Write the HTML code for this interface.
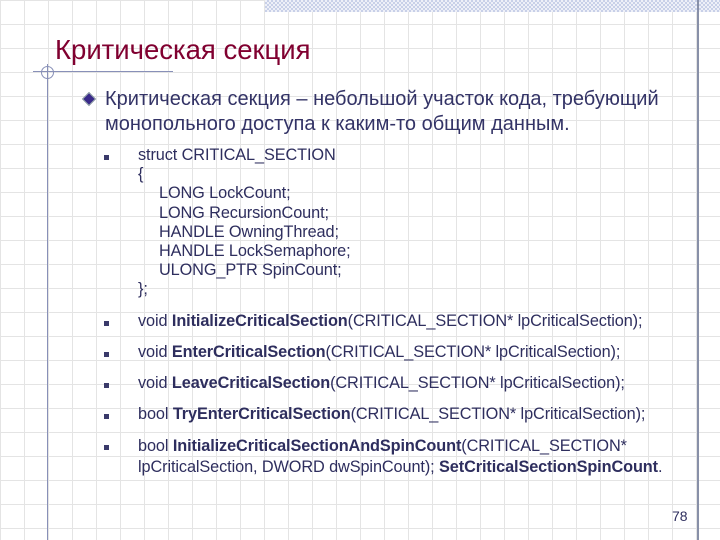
<!DOCTYPE html>
<html><head><meta charset="utf-8"><style>
body{margin:0;width:720px;height:540px;position:relative;overflow:hidden;background:#fff;
background-image:repeating-linear-gradient(to right,#e4e4e4 0 1px,transparent 1px 24px),repeating-linear-gradient(to bottom,#e4e4e4 0 1px,transparent 1px 24px);
font-family:"Liberation Sans",sans-serif;color:#2e2e5e}
.a{position:absolute;white-space:nowrap}
.c{font-size:16.3px;letter-spacing:-0.1px;left:138px}
.sq{position:absolute;left:104px;width:5px;height:5px;background:#3a3a6a}
b{font-weight:bold}
.i{display:inline-block;width:21px}
</style></head><body>
<div class="a" style="left:265px;top:0;width:455px;height:12px;background-image:repeating-conic-gradient(#c8d0e8 0 25%,#eef0f8 0 50%);background-size:4px 4px"></div>
<div class="a" style="left:697px;top:0;width:2px;height:540px;background:#8890a8"></div>
<div class="a" style="left:33px;top:71px;width:140px;height:1px;background:#8890b8"></div>
<div class="a" style="left:47px;top:64px;width:1px;height:476px;background:#8890b8"></div>
<div class="a" style="left:41px;top:66px;width:11px;height:11px;border:1px solid #8890b8;border-radius:50%"></div>
<div class="a" style="left:55px;top:34px;font-size:27.5px;color:#800030">Критическая секция</div>
<div class="a" style="left:84px;top:94px;width:8px;height:8px;background:#3a2a8a;border:1px solid #9aa;transform:rotate(45deg)"></div>
<div class="a" style="left:105px;top:87px;font-size:20px;line-height:25px;color:#333366">Критическая секция – небольшой участок кода, требующий<br>монопольного доступа к каким-то общим данным.</div>
<div class="sq" style="top:155px"></div>
<div class="a c" style="top:146px;line-height:19.2px">struct CRITICAL_SECTION<br>{<br><span class="i"></span>LONG LockCount;<br><span class="i"></span>LONG RecursionCount;<br><span class="i"></span>HANDLE OwningThread;<br><span class="i"></span>HANDLE LockSemaphore;<br><span class="i"></span>ULONG_PTR SpinCount;<br>};</div>
<div class="sq" style="top:321px"></div>
<div class="a c" style="top:312px">void <b>InitializeCriticalSection</b>(CRITICAL_SECTION* lpCriticalSection);</div>
<div class="sq" style="top:352px"></div>
<div class="a c" style="top:343px">void <b>EnterCriticalSection</b>(CRITICAL_SECTION* lpCriticalSection);</div>
<div class="sq" style="top:383px"></div>
<div class="a c" style="top:374px">void <b>LeaveCriticalSection</b>(CRITICAL_SECTION* lpCriticalSection);</div>
<div class="sq" style="top:414px"></div>
<div class="a c" style="top:405px">bool <b>TryEnterCriticalSection</b>(CRITICAL_SECTION* lpCriticalSection);</div>
<div class="sq" style="top:445px"></div>
<div class="a c" style="top:436px;line-height:21px">bool <b>InitializeCriticalSectionAndSpinCount</b>(CRITICAL_SECTION*<br>lpCriticalSection, DWORD dwSpinCount); <b>SetCriticalSectionSpinCount</b>.</div>
<div class="a" style="left:672px;top:508px;font-size:14px">78</div>
</body></html>
